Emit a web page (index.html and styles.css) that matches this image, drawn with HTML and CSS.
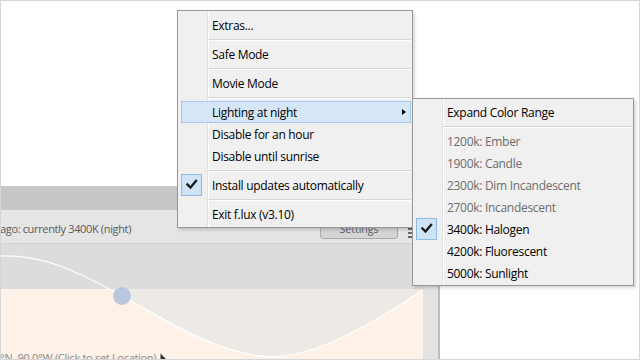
FILE: index.html
```html
<!DOCTYPE html>
<html>
<head>
<meta charset="utf-8">
<link rel="stylesheet" href="styles.css">
</head>
<body>
<div class="stage">
  <div class="window">
    <div class="titlebar"></div>
    <div class="toolbar">
      <span class="status">ago: currently 3400K (night)</span>
      <span class="settings">Settings</span>
      <span class="menuicon"><i></i><i></i><i></i></span>
    </div>
    <div class="body">
      <div class="graph">
        <svg class="chart" width="422" height="114" viewBox="1 245 422 114">
          <rect x="1" y="245" width="422" height="114" fill="#edeae5"/>
          <path d="M1,257 C40,256 70,268 122,297 C170,324 210,350 260,357 C300,362 350,340 423,291 L423,359 L1,359 Z" fill="#fdf1e8"/>
          <rect x="1" y="245" width="422" height="45" fill="#dcdcdc"/>
          <path d="M1,257 C40,256 70,268 122,297 C170,324 210,350 260,357 C300,362 350,340 423,291" fill="none" stroke="#ffffff" stroke-width="1.3"/>
          <circle cx="122" cy="297" r="9" fill="#bac7df"/>
        </svg>
        <div class="loc">
          <span>°N, 90.0°W (Click to set Location)</span>
          <svg class="cursor" width="7" height="10" viewBox="0 0 7 10"><path d="M0.5,0.5 L0.5,8.5 L2.5,6.5 L6.5,6.5 Z" fill="#333"/></svg>
        </div>
      </div>
      <div class="strip"></div>
    </div>
  </div>

  <div class="menu main">
    <div class="item"><span class="gut"></span><span class="label">Extras...</span></div>
    <div class="sep"></div>
    <div class="item"><span class="gut"></span><span class="label">Safe Mode</span></div>
    <div class="sep"></div>
    <div class="item"><span class="gut"></span><span class="label">Movie Mode</span></div>
    <div class="sep"></div>
    <div class="item hl"><span class="gut"></span><span class="label">Lighting at night</span><span class="arrow"></span></div>
    <div class="item"><span class="gut"></span><span class="label">Disable for an hour</span></div>
    <div class="item"><span class="gut"></span><span class="label">Disable until sunrise</span></div>
    <div class="sep"></div>
    <div class="item"><span class="gut"><span class="chk"><svg width="19" height="20" viewBox="0 0 19 20"><path d="M5.5,9.5 L8.5,12.5 L14,6" fill="none" stroke="#1a1a1a" stroke-width="2.4" stroke-linecap="square"/></svg></span></span><span class="label">Install updates automatically</span></div>
    <div class="sep"></div>
    <div class="item"><span class="gut"></span><span class="label">Exit f.lux (v3.10)</span></div>
  </div>

  <div class="menu sub">
    <div class="item"><span class="gut"></span><span class="label">Expand Color Range</span></div>
    <div class="sep"></div>
    <div class="item dis"><span class="gut"></span><span class="label">1200k: Ember</span></div>
    <div class="item dis"><span class="gut"></span><span class="label">1900k: Candle</span></div>
    <div class="item dis"><span class="gut"></span><span class="label">2300k: Dim Incandescent</span></div>
    <div class="item dis"><span class="gut"></span><span class="label">2700k: Incandescent</span></div>
    <div class="item"><span class="gut"><span class="chk"><svg width="19" height="20" viewBox="0 0 19 20"><path d="M5.5,9.5 L8.5,12.5 L14,6" fill="none" stroke="#1a1a1a" stroke-width="2.4" stroke-linecap="square"/></svg></span></span><span class="label">3400k: Halogen</span></div>
    <div class="item"><span class="gut"></span><span class="label">4200k: Fluorescent</span></div>
    <div class="item"><span class="gut"></span><span class="label">5000k: Sunlight</span></div>
  </div>
</div>
</body>
</html>
```

FILE: styles.css
```css
html, body {
  margin: 0;
  padding: 0;
  background: #ffffff;
}

.stage {
  position: relative;
  box-sizing: border-box;
  width: 640px;
  height: 360px;
  overflow: hidden;
  border: 1px solid #d6d6d6;
  padding-top: 185px;
  background: #ffffff;
  font-family: "Open Sans", "Noto Sans", sans-serif;
  font-size: 12px;
}

.window {
  width: 439px;
  height: 173px;
  display: flex;
  flex-direction: column;
}

.titlebar {
  height: 24px;
  background: #c7c7c7;
  flex: none;
}

.toolbar {
  height: 34px;
  box-sizing: border-box;
  flex: none;
  background: #e5e5e5;
  border-bottom: 1px solid #d2d2d2;
  display: flex;
  align-items: flex-start;
  color: #5a5a5a;
  font-size: 11px;
}

.status {
  margin-top: 11px;
  margin-left: -1px;
  letter-spacing: -0.35px;
}

.settings {
  margin-left: auto;
  margin-top: 8px;
  width: 78px;
  height: 21px;
  box-sizing: border-box;
  background: #d5d5d5;
  border: 1px solid #a9a9a9;
  border-radius: 3px;
  display: flex;
  align-items: center;
  justify-content: center;
  color: #5a5a5a;
  font-size: 10.5px;
}

.menuicon {
  margin-left: 10px;
  margin-right: 24px;
  margin-top: 18px;
  width: 8px;
  display: flex;
  flex-direction: column;
  gap: 2px;
}

.menuicon i {
  display: block;
  height: 2px;
  background: #6a6a6a;
}

.body {
  flex: 1;
  display: flex;
}

.graph {
  position: relative;
  width: 422px;
  flex: none;
  overflow: hidden;
  background: #fdf1e8;
}

.chart {
  display: block;
}

.loc {
  position: absolute;
  left: -1px;
  top: 106px;
  display: flex;
  align-items: center;
  gap: 4px;
  color: #8a8a8a;
  font-size: 11px;
  letter-spacing: -0.3px;
  white-space: nowrap;
}

.cursor {
  display: block;
}

.strip {
  width: 15px;
  flex: none;
  background: #e3e3e3;
  border-right: 2px solid #bdbdbd;
}

/* menus */
.menu {
  position: absolute;
  box-sizing: border-box;
  border: 1px solid #979797;
  background: linear-gradient(to right, #f0f0f0 29px, #e2e3e3 29px, #e2e3e3 30px, #ffffff 30px, #ffffff 31px, #f0f0f0 31px);
  box-shadow: 2px 2px 3px rgba(0, 0, 0, 0.16);
  color: #000000;
}

.main {
  left: 176px;
  top: 9px;
  width: 236px;
  padding: 3px 1px 2px 3px;
}

.sub {
  left: 411px;
  top: 97px;
  width: 222px;
  padding: 2px 1px 1px 3px;
}

.item {
  position: relative;
  height: 22px;
  box-sizing: border-box;
  display: flex;
  align-items: center;
  white-space: nowrap;
}

.item.hl {
  background: #d5e6f7;
  border: 1px solid #a5c9ee;
}

.item.hl .gut {
  margin-left: -1px;
}

.item.dis {
  color: #6d6d6d;
}

.gut {
  width: 31px;
  height: 22px;
  flex: none;
  display: flex;
  align-items: center;
}

.chk {
  width: 21px;
  height: 22px;
  box-sizing: border-box;
  background: #cfe3f6;
  border: 1px solid #8dbbe6;
  display: flex;
  align-items: center;
  justify-content: center;
}

.chk svg {
  display: block;
}

.label {
  letter-spacing: -0.3px;
}

.arrow {
  position: absolute;
  right: 4px;
  top: 7px;
  width: 0;
  height: 0;
  border-left: 4px solid #000000;
  border-top: 3.5px solid transparent;
  border-bottom: 3.5px solid transparent;
}

.sep {
  position: relative;
  height: 7px;
}

.sep::after {
  content: "";
  position: absolute;
  left: 27px;
  right: 0;
  top: 3px;
  height: 1px;
  background: #d7d7d7;
  box-shadow: 0 1px 0 #ffffff;
}
```
